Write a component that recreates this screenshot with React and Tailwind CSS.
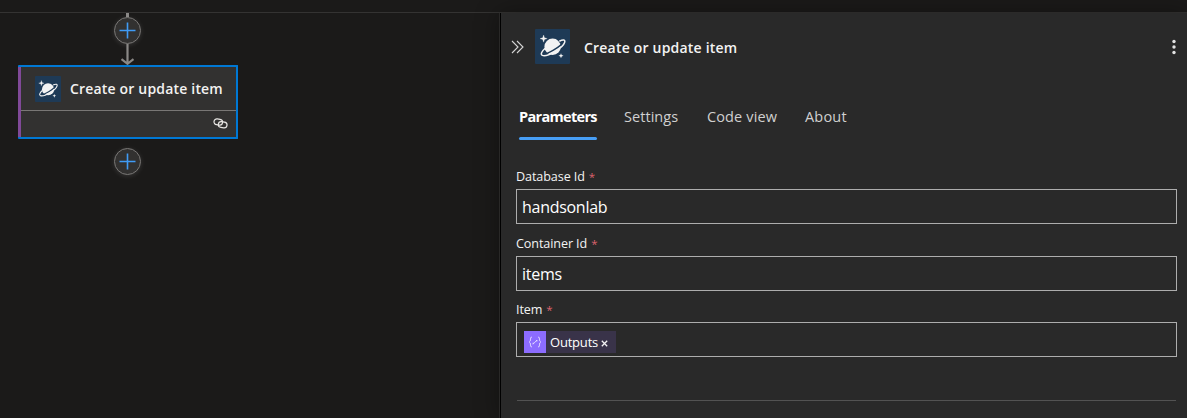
import React from "react";

function Planet({ className }) {
  return (
    <svg viewBox="0 0 35 35" className={className}>
      <rect width="35" height="35" rx="1" fill="#1e3a56" />
      <circle cx="17.6" cy="17.8" r="8.2" fill="#f3f3f3" />
      <path d="M6.6 24.6C10 26.6 27.5 17.5 28.4 11.6" fill="none" stroke="#1e3a56" strokeWidth="1.5" />
      <path d="M24.3 12.2C28.2 10.4 30.6 10.6 29.6 13.6C27.8 19.2 12.5 28.2 7.3 26.4C5 25.4 7 22 10.2 19.2" fill="none" stroke="#f3f3f3" strokeWidth="1.5" />
      <path d="M8.6 6 L9.5 8.7 L12.2 9.6 L9.5 10.5 L8.6 13.2 L7.7 10.5 L5 9.6 L7.7 8.7 Z" fill="#f3f3f3" stroke="#f3f3f3" strokeWidth=".3" />
      <path d="M26 24.2 L26.7 26 L28.5 26.7 L26.7 27.4 L26 29.2 L25.3 27.4 L23.5 26.7 L25.3 26 Z" fill="#f3f3f3" />
    </svg>
  );
}

function AddButton({ className }) {
  return (
    <button className={`flex size-[27px] shrink-0 items-center justify-center rounded-full border border-[#797775] bg-[#323130] shadow-[0_1px_5px_rgba(255,255,255,0.12)] ${className}`}>
      <svg viewBox="0 0 17 17" className="size-[17px] shrink-0">
        <path d="M8.5 .5V16.5M.5 8.5H16.5" stroke="#3f9bf5" strokeWidth="1.6" fill="none" />
      </svg>
    </button>
  );
}

function Field({ label, className, children }) {
  return (
    <div className={className}>
      <div className="flex h-[18px] items-center pt-[2px] text-[12.6px] font-medium tracking-[-0.1px] text-[#f3f3f3]">
        <span>{label}</span>
        <span className="ml-1 text-[11.5px] text-[#dc626d]">*</span>
      </div>
      <div className="mt-1 flex h-[35px] w-[661px] items-center border border-[#adadad] pl-[5px] text-[16px] tracking-[-0.28px] text-white">
        {children}
      </div>
    </div>
  );
}

export default function App() {
  return (
    <div className="flex h-[418px] w-[1187px] flex-col overflow-hidden bg-[#1b1a19] font-['Open_Sans','Noto_Sans',sans-serif]">
      <div className="h-[13px] shrink-0 border-b border-[#343332]" />
      <div className="flex min-h-0 flex-1">
        <main className="w-[499px] shrink-0 pl-[18px]">
          <div className="flex w-[219px] flex-col items-center">
            <div className="h-[4px] w-[3px] bg-[#8a8886]" />
            <AddButton />
            <svg viewBox="0 0 15 21" className="h-[21px] w-[15px]">
              <path d="M7.5 0V20M1.5 15.2L7.5 19.8L13.5 15.2" fill="none" stroke="#8a8886" strokeWidth="2.2" />
            </svg>
            <section className="flex h-[74px] w-[220px] self-start rounded-[1px] border-y-2 border-r-2 border-[#0078d4] bg-[#323130]">
              <div className="w-[3px] bg-[#804998]" />
              <div className="flex flex-1 flex-col">
                <div className="flex h-[44px] items-center border-b border-[#797775] pl-[14px]">
                  <Planet className="size-[26px]" />
                  <h2 className="ml-[9px] whitespace-nowrap text-[14px] font-semibold tracking-[0.18px] text-[#f3f2f1]">Create or update item</h2>
                </div>
                <div className="flex flex-1 items-center justify-end pb-px pr-[8px]">
                  <svg viewBox="0 0 15 11" className="h-[11px] w-[15px]" fill="none" stroke="#e8e6e3" strokeWidth="1.2">
                    <rect x="1" y="1.1" width="8.6" height="5.8" rx="2.9" transform="rotate(8 5.3 3.8)" />
                    <rect x="5.3" y="3.8" width="8.7" height="5.8" rx="2.9" transform="rotate(8 9.6 6.8)" />
                  </svg>
                </div>
              </div>
            </section>
            <AddButton className="mt-[9px]" />
          </div>
        </main>
        <aside className="flex flex-1 flex-col border-l border-[#292827] bg-[#292929] shadow-[0_0_22px_rgba(0,0,0,0.35)]">
          <div className="flex min-h-0 flex-1 flex-col border-l border-black pl-[15px]">
            <header className="mt-4 flex h-[35px] items-center">
              <svg viewBox="0 0 14 14" className="ml-[-5px] h-[14px] w-[14px]" fill="none" stroke="#d6d6d6" strokeWidth="1.1">
                <path d="M1 1L7 7L1 13M6 1L12 7L6 13" />
              </svg>
              <Planet className="ml-[10px] size-[35px]" />
              <h1 className="ml-[14px] pt-[2px] text-[14px] font-semibold tracking-[0.2px] text-[#f3f3f3]">Create or update item</h1>
              <svg viewBox="0 0 4 16" className="ml-auto mr-[11px] h-4 w-1 fill-[#e3e3e3]">
                <circle cx="2" cy="2.5" r="1.7" />
                <circle cx="2" cy="8" r="1.7" />
                <circle cx="2" cy="13.5" r="1.7" />
              </svg>
            </header>
            <nav className="ml-[3px] mt-[40px] flex h-[36px] text-[14.5px] text-[#d0d0d0]">
              <span className="flex h-full w-[78px] flex-col justify-between pt-[2px] font-bold tracking-[-0.68px] text-white">
                Parameters
                <span className="h-[3px] rounded-full bg-[#479ef5]" />
              </span>
              <span className="ml-[27px] w-[56px] whitespace-nowrap pt-[2px] tracking-[0.05px]">Settings</span>
              <span className="ml-[27px] w-[71px] whitespace-nowrap pt-[2px] tracking-[0.13px]">Code view</span>
              <span className="ml-[27px] pt-[2px] tracking-[0.2px]">About</span>
            </nav>
            <Field label="Database Id" className="mt-[27px]"><span className="pt-px">handsonlab</span></Field>
            <Field label="Container Id" className="mt-[10px]">items</Field>
            <Field label="Item" className="mt-[9px]">
              <div className="ml-[2px] mt-[5px] flex h-[22px] w-[92px] items-center bg-[#393349] text-[13px] tracking-[-0.2px]">
                <div className="flex h-full w-[22px] items-center justify-center bg-[#8c6cff]">
                  <svg viewBox="0 0 14 12" className="h-3 w-[14px]" fill="none" stroke="#eee9ff" strokeWidth=".8">
                    <path d="M4 1Q2.3 1 2.5 3Q2.7 5.5 1.2 6Q2.7 6.5 2.5 9Q2.3 11 4 11M10 1Q11.7 1 11.5 3Q11.3 5.5 12.8 6Q11.3 6.5 11.5 9Q11.7 11 10 11M5 8.2L9 4M5 8.2L5.2 6.6M9 4L8.8 5.6" />
                  </svg>
                </div>
                <span className="ml-[4px] pt-px">Outputs</span>
                <svg viewBox="0 0 7 7" className="ml-[3px] mt-[2px] size-[7px]" stroke="#f3f3f3" strokeWidth="1.3">
                  <path d="M.8 .8L6.2 6.2M6.2 .8L.8 6.2" />
                </svg>
              </div>
            </Field>
            <hr className="ml-px mt-[43px] w-[659px] border-[#525252]" />
          </div>
        </aside>
      </div>
    </div>
  );
}
